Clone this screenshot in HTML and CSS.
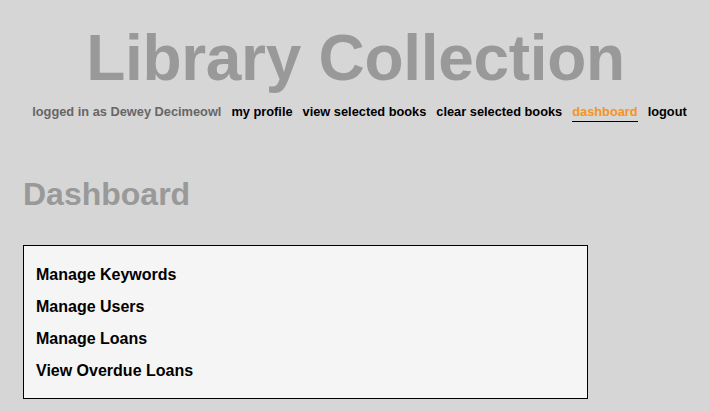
FILE: index.html
```html
<!DOCTYPE html>
<html>
<head>
<meta charset="utf-8">
<link rel="stylesheet" href="styles.css">
</head>
<body>
<header class="site-header">
  <h1 class="site-title">Library Collection</h1>
  <nav class="nav">
    <span class="nav-user">logged in as Dewey Decimeowl</span>
    <a class="nav-link" href="#">my profile</a>
    <a class="nav-link" href="#">view selected books</a>
    <a class="nav-link" href="#">clear selected books</a>
    <a class="nav-link nav-active" href="#">dashboard</a>
    <a class="nav-link" href="#">logout</a>
  </nav>
</header>
<main class="content">
  <h2 class="page-title">Dashboard</h2>
  <div class="panel">
    <a class="panel-link" href="#">Manage Keywords</a>
    <a class="panel-link" href="#">Manage Users</a>
    <a class="panel-link" href="#">Manage Loans</a>
    <a class="panel-link" href="#">View Overdue Loans</a>
  </div>
</main>
</body>
</html>
```
FILE: styles.css
```css
html, body {
  margin: 0;
  padding: 0;
  background: #d6d6d6;
  font-family: "Liberation Sans", Arial, Helvetica, sans-serif;
  font-weight: bold;
}
.site-header {
  display: flex;
  flex-direction: column;
  align-items: center;
  padding-top: 26px;
}
.site-title {
  margin: 0;
  font-size: 64px;
  line-height: 64px;
  color: #999999;
  letter-spacing: -0.3px;
  padding-left: 2px;
}
.nav {
  display: flex;
  gap: 10px;
  margin-top: 14px;
  padding-left: 10px;
  font-size: 12.8px;
  line-height: 16px;
}
.nav-user {
  color: #666666;
}
.nav-link {
  color: #000000;
  text-decoration: none;
}
.nav-active {
  color: #f7931e;
  border-bottom: 1px solid #000000;
  padding-bottom: 1px;
  height: 16px;
}
.content {
  padding: 0 23px;
}
.page-title {
  margin: 56px 0 35px;
  font-size: 32px;
  line-height: 32px;
  color: #999999;
}
.panel {
  box-sizing: border-box;
  width: 565px;
  border: 1px solid #000000;
  background: #f5f5f5;
  padding: 13px 12px 11px;
  display: flex;
  flex-direction: column;
}
.panel-link {
  color: #000000;
  text-decoration: none;
  font-size: 16px;
  line-height: 32px;
}
```
